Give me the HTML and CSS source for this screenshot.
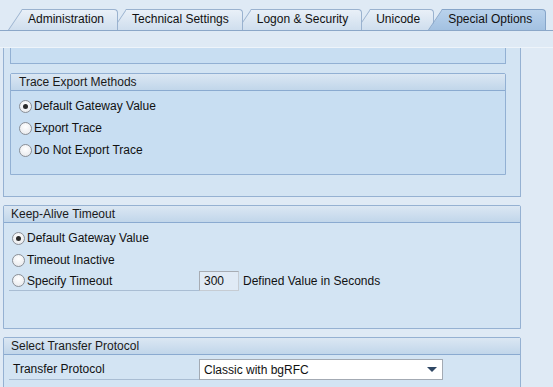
FILE: index.html
```html
<!DOCTYPE html>
<html lang="en">
<head>
  <meta charset="utf-8">
  <title>Special Options</title>
  <link rel="stylesheet" href="styles.css">
</head>
<body>
  <div class="tabbar">
    <div class="tab">Administration</div>
    <div class="tab">Technical Settings</div>
    <div class="tab">Logon &amp; Security</div>
    <div class="tab">Unicode</div>
    <div class="tab tab-active">Special Options</div>
  </div>

  <div class="view">
    <div class="panel panel-top">
      <div class="box box-cut"></div>
      <div class="box trace-box">
        <div class="box-head">Trace Export Methods</div>
        <div class="box-body trace-body">
          <div class="radio-row"><span class="radio checked"></span>Default Gateway Value</div>
          <div class="radio-row"><span class="radio"></span>Export Trace</div>
          <div class="radio-row"><span class="radio"></span>Do Not Export Trace</div>
        </div>
      </div>
    </div>

    <div class="panel group keepalive">
      <div class="box-head">Keep-Alive Timeout</div>
      <div class="group-body">
        <div class="radio-row"><span class="radio checked"></span>Default Gateway Value</div>
        <div class="radio-row"><span class="radio"></span>Timeout Inactive</div>
        <div class="field-row">
          <div class="radio-row field-label"><span class="radio"></span>Specify Timeout</div>
          <div class="input">300</div>
          <div class="field-note">Defined Value in Seconds</div>
        </div>
      </div>
    </div>

    <div class="panel group protocol">
      <div class="box-head">Select Transfer Protocol</div>
      <div class="group-body protocol-body">
        <div class="field-row">
          <div class="field-label plain-label">Transfer Protocol</div>
          <div class="select">
            <span>Classic with bgRFC</span>
            <span class="select-arrow"></span>
          </div>
        </div>
      </div>
    </div>
  </div>
</body>
</html>
```

FILE: styles.css
```css
body {
  margin: 0;
  background-color: #dfeaf5;
  font-family: 'Liberation Sans', Arial, sans-serif;
  font-size: 12px;
  color: #111;
  overflow: hidden;
}

/* tab strip */

.tabbar {
  display: flex;
  height: 21px;
  padding: 9px 0 0 8px;
  border-bottom: 1px solid #8ba7c8;
}

.tab {
  position: relative;
  z-index: 1;
  height: 21px;
  line-height: 21px;
  padding: 0 14px 0 20px;
  margin-right: -6px;
  white-space: nowrap;
}

.tab:nth-child(1) { z-index: 5; }
.tab:nth-child(2) { z-index: 4; }
.tab:nth-child(3) { z-index: 3; }
.tab:nth-child(4) { z-index: 2; }

.tab::before {
  content: "";
  position: absolute;
  z-index: -1;
  left: 0;
  top: 0;
  bottom: 0;
  width: 20px;
  border-left: 1px solid #9ab2cf;
  border-top: 1px solid #9ab2cf;
  background: linear-gradient(#e9f0f8, #cfdeee);
  transform: skewX(-34deg);
  transform-origin: bottom left;
}

.tab::after {
  content: "";
  position: absolute;
  z-index: -1;
  left: 14px;
  top: 0;
  right: 0;
  bottom: 0;
  border-top: 1px solid #9ab2cf;
  border-right: 1px solid #9ab2cf;
  border-top-right-radius: 4px;
  background: linear-gradient(#e9f0f8, #cfdeee);
}

.tab-active {
  z-index: 6;
}

.tab-active::before,
.tab-active::after {
  background: linear-gradient(#b9d2ec, #a3c1e1);
  border-color: #86a5c9;
}

/* scrolled content */

.view {
  margin-top: 16px;
  border-top: 1px solid #eef4fa;
}

.panel {
  width: 516px;
  margin-left: 3px;
  border: 1px solid #95b1d2;
  background-color: #d3e4f3;
}

.panel-top {
  border-top: none;
  padding: 0 14px 21px 6px;
  width: 496px;
}

.box {
  border: 1px solid #92b0d3;
  background-color: #c8def2;
}

.box-cut {
  height: 15px;
  border-top: none;
}

.trace-box {
  margin-top: 9px;
  border-radius: 2px 2px 0 0;
}

.box-head {
  height: 16px;
  line-height: 16px;
  padding-left: 8px;
  border-bottom: 1px solid #8aaad0;
  background: linear-gradient(#dbe7f3, #c1d6ea);
  color: #1a1a1a;
}

.trace-body {
  height: 79px;
  padding: 4px 0 0 8px;
}

.radio-row {
  display: flex;
  align-items: center;
  height: 22px;
}

.radio {
  box-sizing: border-box;
  width: 13px;
  height: 13px;
  margin-right: 2px;
  border: 1px solid #8a8f96;
  border-radius: 50%;
  background: radial-gradient(circle at 50% 35%, #ffffff, #e4e6ea);
  display: flex;
  align-items: center;
  justify-content: center;
}

.radio.checked::after {
  content: "";
  width: 5px;
  height: 5px;
  border-radius: 50%;
  background-color: #2a2a2a;
}

/* group boxes */

.group {
  margin-top: 8px;
  border-radius: 2px 2px 0 0;
}

.group .box-head {
  padding-left: 7px;
}

.keepalive .group-body {
  height: 101px;
  padding: 4px 0 0 5px;
}

.keepalive .radio {
  margin-left: 3px;
}

.field-row {
  display: flex;
  align-items: center;
}

.field-label {
  box-sizing: border-box;
  width: 190px;
  height: 20px;
  border-bottom: 1px solid #a9bdd3;
}

.input {
  box-sizing: border-box;
  width: 40px;
  height: 20px;
  line-height: 18px;
  padding-left: 4px;
  border: 1px solid #a7acb3;
  border-right-color: #c6ccd3;
  border-bottom-color: #c6ccd3;
  background-color: #e0eaf5;
}

.field-note {
  margin-left: 4px;
}

.protocol-body {
  height: 40px;
  padding: 4px 0 0 5px;
}

.plain-label {
  padding-left: 4px;
  line-height: 22px;
  height: 20px;
  display: flex;
  align-items: center;
}

.select {
  box-sizing: border-box;
  display: flex;
  align-items: center;
  justify-content: space-between;
  width: 244px;
  height: 21px;
  padding: 0 4px 0 4px;
  border: 1px solid #a3aab3;
  background-color: #fff;
}

.select-arrow {
  width: 0;
  height: 0;
  margin-right: 1px;
  border-left: 5px solid transparent;
  border-right: 5px solid transparent;
  border-top: 5px solid #2f4764;
}
```
